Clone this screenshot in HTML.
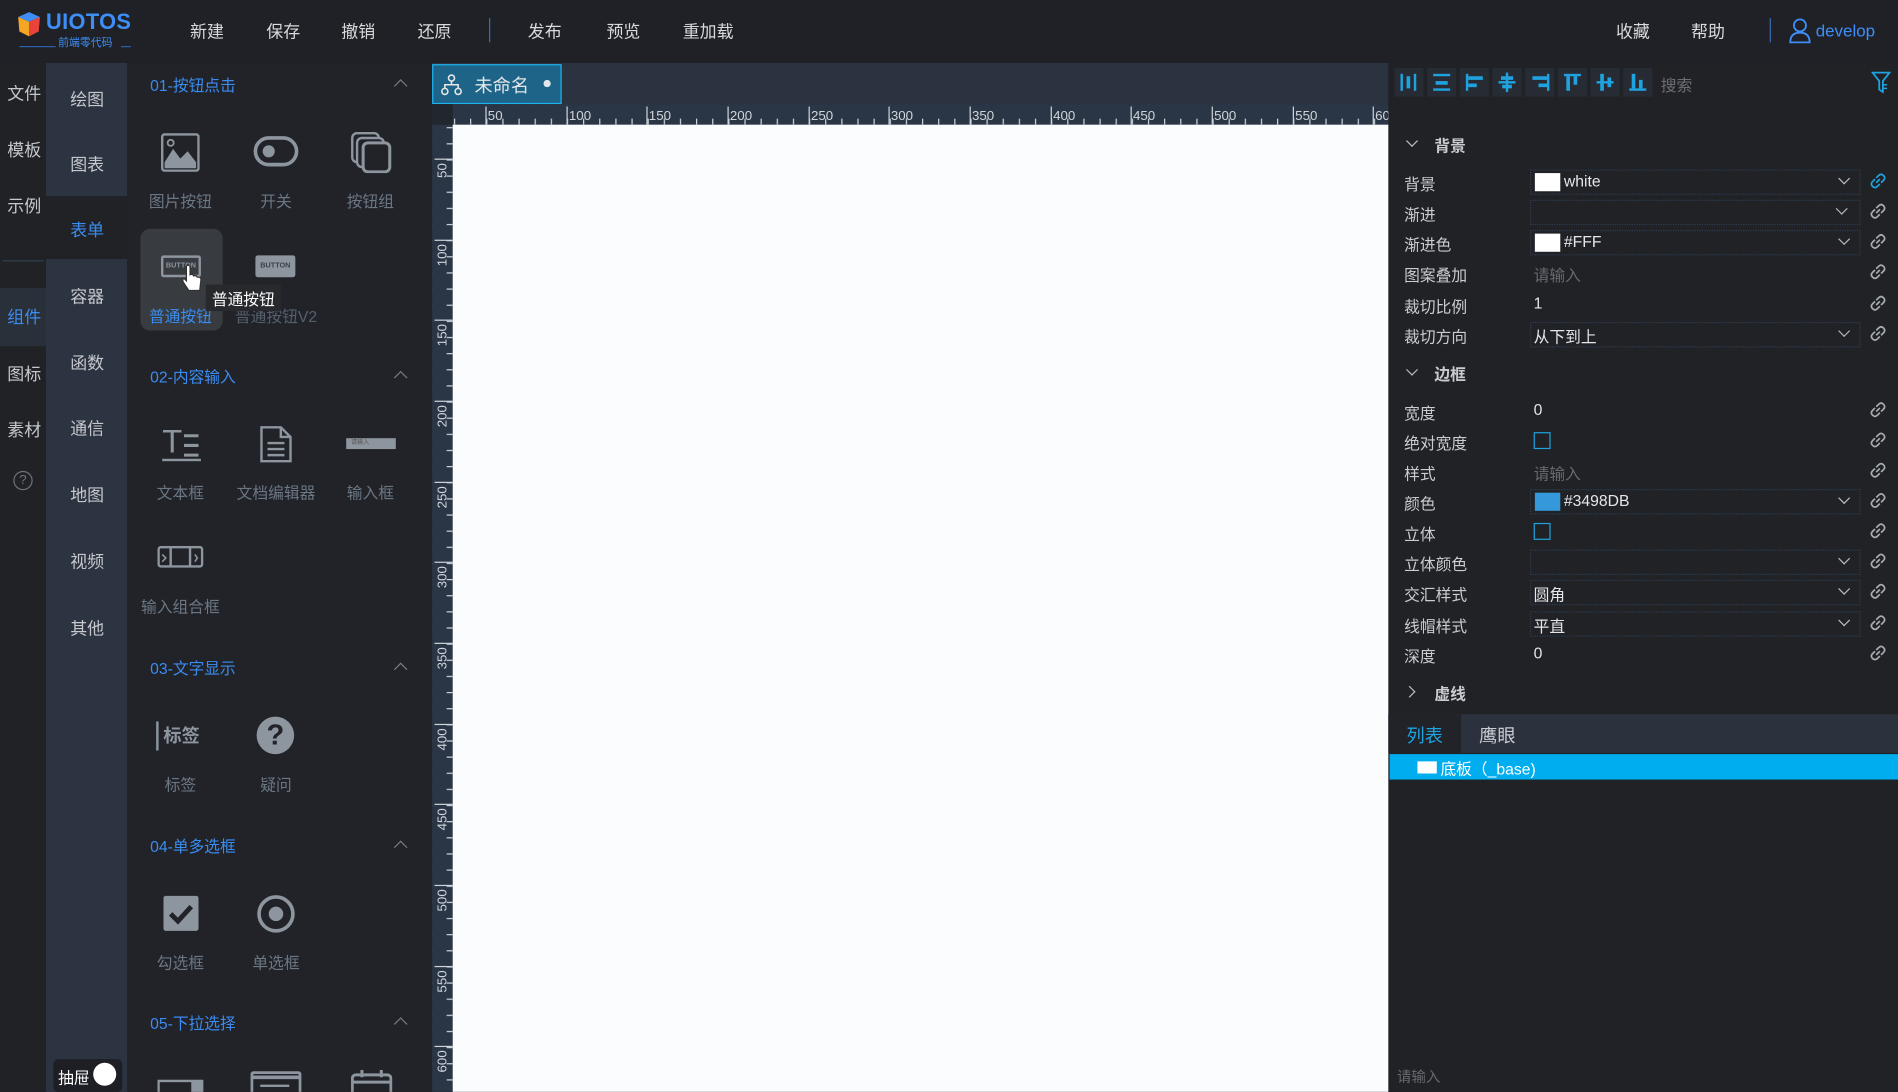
<!DOCTYPE html>
<html><head><meta charset="utf-8"><style>
*{margin:0;padding:0;box-sizing:border-box}
html,body{width:1898px;height:1092px;overflow:hidden;background:#202226}
#w{position:absolute;left:0;top:0;width:1568px;height:902px;transform:scale(1.21046);transform-origin:0 0;font-family:"Liberation Sans","Noto Sans CJK SC",sans-serif;color:#c9ccd1;font-size:13px;background:#202226}
.a{position:absolute;white-space:nowrap}
.m{font-size:14px;color:#d8dadd}
.c1{font-size:14px;color:#c5c8cc}
.sec{font-size:13px;color:#3b8cf0}
.lab{font-size:13px;color:#6c7784;text-align:center;width:80px}
.ic{position:absolute}
.pl{font-size:13px;color:#c9ccd1;left:1160px}
.sel{position:absolute;left:1264px;width:273px;height:21px;border:1px dotted #2e3d52}
.chev{position:absolute;width:7px;height:7px;border-right:1.5px solid #b8bcc2;border-bottom:1.5px solid #b8bcc2;transform:rotate(45deg)}
.lk{position:absolute;left:1544px}
.up{position:absolute;width:8px;height:8px;border-left:1.5px solid #767c85;border-top:1.5px solid #767c85;transform:rotate(45deg);left:327px}
</style></head><body><div id="w">
<!-- top bar -->
<div class="a" style="left:0;top:0;width:1568px;height:52px;background:#1f2127"></div>
<svg class="ic" style="left:13px;top:9px" width="22" height="22" viewBox="0 0 22 22"><path d="M2 5 L11 1 L20 5 L11 9Z" fill="#3f8ef5"/><path d="M2 5 L11 9 L11 21 L3 17Z" fill="#f5a623"/><path d="M11 9 L20 5 L19 17 L11 21Z" fill="#e8443a"/></svg>
<div class="a" style="left:38px;top:8px;font-size:18px;font-weight:bold;color:#3e8ef7;letter-spacing:0.3px">UIOTOS</div>
<div class="a" style="left:48px;top:28px;font-size:9px;color:#3e8ef7">前端零代码</div>
<div class="a" style="left:16px;top:38px;width:30px;border-top:1px solid #2c5fa8"></div>
<div class="a" style="left:100px;top:38px;width:8px;border-top:1px solid #2c5fa8"></div>
<div class="a m" style="left:157px;top:16px">新建</div>
<div class="a m" style="left:220px;top:16px">保存</div>
<div class="a m" style="left:282px;top:16px">撤销</div>
<div class="a m" style="left:345px;top:16px">还原</div>
<div class="a" style="left:404px;top:15px;height:20px;border-left:1px solid #3a6fb0"></div>
<div class="a m" style="left:436px;top:16px">发布</div>
<div class="a m" style="left:501px;top:16px">预览</div>
<div class="a m" style="left:564px;top:16px">重加载</div>
<div class="a m" style="left:1335px;top:16px">收藏</div>
<div class="a m" style="left:1397px;top:16px">帮助</div>
<div class="a" style="left:1462px;top:15px;height:20px;border-left:1px solid #3a6fb0"></div>
<svg class="ic" style="left:1477px;top:14px" width="20" height="22" viewBox="0 0 20 22"><circle cx="10" cy="7" r="5" fill="none" stroke="#3e8ef7" stroke-width="1.5"/><path d="M2 21 Q2 13 10 13 Q18 13 18 21Z" fill="none" stroke="#3e8ef7" stroke-width="1.5"/></svg>
<div class="a" style="left:1500px;top:17px;font-size:14px;color:#3e8ef7">develop</div>

<!-- col1 -->
<div class="a" style="left:0;top:52px;width:38px;height:850px;background:#202226"></div>
<div class="a" style="left:0;top:238px;width:38px;height:48px;background:#2a303a"></div>
<div class="a" style="left:2px;top:215px;width:34px;border-top:1px solid #34404f"></div>
<div class="a c1" style="left:6px;top:67px">文件</div>
<div class="a c1" style="left:6px;top:114px">模板</div>
<div class="a c1" style="left:6px;top:160px">示例</div>
<div class="a c1" style="left:6px;top:252px;color:#3b8cf0">组件</div>
<div class="a c1" style="left:6px;top:299px">图标</div>
<div class="a c1" style="left:6px;top:345px">素材</div>
<div class="a" style="left:11px;top:389px;width:16px;height:16px;border:1px solid #6d737b;border-radius:50%;font-size:11px;color:#6d737b;text-align:center;line-height:14px">?</div>

<!-- col2 -->
<div class="a" style="left:38px;top:52px;width:67px;height:850px;background:#2d3441"></div>
<div class="a" style="left:38px;top:162px;width:67px;height:52px;background:#202226"></div>
<div class="a c1" style="left:58px;top:72px">绘图</div>
<div class="a c1" style="left:58px;top:126px">图表</div>
<div class="a c1" style="left:58px;top:180px;color:#3b8cf0">表单</div>
<div class="a c1" style="left:58px;top:235px">容器</div>
<div class="a c1" style="left:58px;top:290px">函数</div>
<div class="a c1" style="left:58px;top:344px">通信</div>
<div class="a c1" style="left:58px;top:399px">地图</div>
<div class="a c1" style="left:58px;top:454px">视频</div>
<div class="a c1" style="left:58px;top:509px">其他</div>
<div class="a" style="left:44px;top:875px;width:57px;height:27px;background:#1d1f24;border-radius:4px"></div>
<div class="a" style="left:48px;top:880px;font-size:13px;color:#fff">抽屉</div>
<div class="a" style="left:77px;top:878px;width:19px;height:19px;background:#fff;border-radius:50%"></div>

<!-- col3 -->
<div class="a" style="left:105px;top:52px;width:252px;height:850px;background:#212328"></div>
<div class="a sec" style="left:124px;top:60px">01-按钮点击</div><div class="up" style="top:67px"></div>
<svg class="ic" style="left:133px;top:110px" width="32" height="32" viewBox="0 0 32 32"><rect x="1" y="1" width="30" height="30" rx="2" fill="none" stroke="#8d959f" stroke-width="2"/><path d="M3 29 L3 24 L10 13 L16 21 L22 15 L29 24 L29 29Z" fill="#8d959f"/><circle cx="8" cy="8" r="2.5" fill="none" stroke="#8d959f" stroke-width="1.5"/></svg>
<svg class="ic" style="left:209px;top:112px" width="38" height="26" viewBox="0 0 38 26"><rect x="2" y="2" width="34" height="22" rx="11" fill="none" stroke="#8d959f" stroke-width="3"/><circle cx="13" cy="13" r="5" fill="#8d959f"/></svg>
<svg class="ic" style="left:290px;top:109px" width="34" height="34" viewBox="0 0 34 34"><rect x="1" y="1" width="22" height="24" rx="4" fill="none" stroke="#8d959f" stroke-width="2"/><rect x="5" y="5" width="22" height="24" rx="4" fill="#212328" stroke="#8d959f" stroke-width="2"/><rect x="10" y="9" width="22" height="24" rx="4" fill="#212328" stroke="#8d959f" stroke-width="2.5"/></svg>
<div class="a lab" style="left:109px;top:156px">图片按钮</div>
<div class="a lab" style="left:188px;top:156px">开关</div>
<div class="a lab" style="left:266px;top:156px">按钮组</div>
<div class="a" style="left:116px;top:189px;width:68px;height:84px;background:#383b40;border-radius:8px"></div>
<div class="a" style="left:133px;top:211px;width:33px;height:18px;border:2px solid #8d959f;border-radius:2px;font-size:6px;color:#8d959f;text-align:center;line-height:14px;font-weight:bold">BUTTON</div>
<div class="a" style="left:211px;top:211px;width:33px;height:18px;background:#8d959f;border-radius:2px;font-size:6px;color:#3a3f47;text-align:center;line-height:18px;font-weight:bold">BUTTON</div>
<svg class="ic" style="left:150px;top:218px" width="18" height="24" viewBox="0 0 18 24"><path d="M4 2 L4 14 L2 12 Q0 13 2 16 L6 22 L15 22 L16 13 Q16 11 14 11 L13 11 Q12 9 10 10 Q9 8 7 9 L7 2 Q5.5 0 4 2Z" fill="#fff" stroke="#333" stroke-width="1"/></svg>
<div class="a lab" style="left:109px;top:251px;color:#3b8cf0">普通按钮</div>
<div class="a lab" style="left:188px;top:251px;color:#55606c">普通按钮V2</div>
<div class="a" style="left:170px;top:235px;width:62px;height:22px;background:#27292d;color:#fff;font-size:13px;padding:2px 5px">普通按钮</div>

<div class="a sec" style="left:124px;top:301px">02-内容输入</div><div class="up" style="top:308px"></div>
<div class="a" style="left:134px;top:350px;font-size:27px;color:#8d959f;font-family:'Liberation Sans',sans-serif">T</div>
<svg class="ic" style="left:150px;top:357px" width="16" height="26" viewBox="0 0 16 26"><path d="M2 3 H14 M2 11 H14 M2 19 H14" stroke="#8d959f" stroke-width="2.5"/></svg>
<div class="a" style="left:134px;top:379px;width:32px;border-top:2.5px solid #8d959f"></div>
<svg class="ic" style="left:214px;top:351px" width="28" height="32" viewBox="0 0 28 32"><path d="M2 2 H18 L26 10 V30 H2Z M18 2 V10 H26" fill="none" stroke="#8d959f" stroke-width="2"/><path d="M7 15 H21 M7 20 H21 M7 25 H21" stroke="#8d959f" stroke-width="2"/></svg>
<div class="a" style="left:286px;top:362px;width:41px;height:9px;background:#8d959f;font-size:5px;color:#555;padding-left:4px;line-height:9px">请输入</div>
<div class="a lab" style="left:109px;top:397px">文本框</div>
<div class="a lab" style="left:188px;top:397px">文档编辑器</div>
<div class="a lab" style="left:266px;top:397px">输入框</div>
<svg class="ic" style="left:130px;top:451px" width="38" height="18" viewBox="0 0 38 18"><rect x="1" y="1" width="36" height="16" rx="2" fill="none" stroke="#8d959f" stroke-width="2"/><path d="M11 1 V17 M27 1 V17" stroke="#8d959f" stroke-width="2"/><path d="M4 7 L7 10 L4 13 M31 7 L33 10 L31 13" stroke="#8d959f" stroke-width="1.3" fill="none"/></svg>
<div class="a lab" style="left:109px;top:491px">输入组合框</div>

<div class="a sec" style="left:124px;top:542px">03-文字显示</div><div class="up" style="top:549px"></div>
<div class="a" style="left:129px;top:596px;height:24px;border-left:2px solid #8d959f"></div>
<div class="a" style="left:135px;top:597px;font-size:15px;font-weight:bold;color:#8d959f">标签</div>
<div class="a" style="left:212px;top:592px;width:31px;height:31px;background:#8d959f;border-radius:50%;color:#212328;font-size:24px;font-weight:bold;text-align:center;line-height:31px">?</div>
<div class="a lab" style="left:109px;top:638px">标签</div>
<div class="a lab" style="left:188px;top:638px">疑问</div>

<div class="a sec" style="left:124px;top:689px">04-单多选框</div><div class="up" style="top:696px"></div>
<svg class="ic" style="left:135px;top:740px" width="30" height="30" viewBox="0 0 30 30"><rect x="0" y="0" width="29" height="29" rx="2" fill="#8d959f"/><path d="M6 15 L12 21 L23 9" stroke="#212328" stroke-width="4" fill="none"/></svg>
<svg class="ic" style="left:212px;top:739px" width="32" height="32" viewBox="0 0 32 32"><circle cx="16" cy="16" r="14" fill="none" stroke="#8d959f" stroke-width="3"/><circle cx="16" cy="16" r="6" fill="#8d959f"/></svg>
<div class="a lab" style="left:109px;top:785px">勾选框</div>
<div class="a lab" style="left:188px;top:785px">单选框</div>

<div class="a sec" style="left:124px;top:835px">05-下拉选择</div><div class="up" style="top:842px"></div>
<svg class="ic" style="left:130px;top:890px" width="40" height="12" viewBox="0 0 40 12"><rect x="1" y="3" width="36" height="14" fill="none" stroke="#8d959f" stroke-width="2"/><rect x="28" y="3" width="9" height="14" fill="#8d959f"/></svg>
<svg class="ic" style="left:207px;top:885px" width="42" height="17" viewBox="0 0 42 17"><rect x="1" y="1" width="40" height="20" rx="2" fill="none" stroke="#8d959f" stroke-width="2.5"/><path d="M1 5 H41" stroke="#8d959f" stroke-width="3"/><path d="M8 12 H32" stroke="#8d959f" stroke-width="2"/></svg>
<svg class="ic" style="left:290px;top:884px" width="34" height="18" viewBox="0 0 34 18"><rect x="1" y="4" width="32" height="20" rx="3" fill="none" stroke="#8d959f" stroke-width="2.5"/><path d="M9 0 V6 M25 0 V6 M1 10 H33" stroke="#8d959f" stroke-width="2.5"/></svg>

<!-- canvas area -->
<div class="a" style="left:357px;top:52px;width:790px;height:34px;background:#2b3340"></div>
<div class="a" style="left:357px;top:53px;width:107px;height:33px;background:#1d6488;border:1.5px solid #1fb3ee"></div>
<svg class="ic" style="left:364px;top:61px" width="18" height="18" viewBox="0 0 18 18"><circle cx="9" cy="3.5" r="2.5" fill="none" stroke="#e6e6e6" stroke-width="1.3"/><circle cx="3.5" cy="14.5" r="2.5" fill="none" stroke="#e6e6e6" stroke-width="1.3"/><circle cx="14.5" cy="14.5" r="2.5" fill="none" stroke="#e6e6e6" stroke-width="1.3"/><path d="M9 6 V9 M3.5 12 V9 H14.5 V12" fill="none" stroke="#e6e6e6" stroke-width="1.3"/></svg>
<div class="a" style="left:392px;top:60px;font-size:15px;color:#e3e6ea">未命名</div>
<div class="a" style="left:449px;top:66px;width:6px;height:6px;border-radius:50%;background:#e3e6ea"></div>
<div class="a" style="left:357px;top:86px;width:790px;height:816px;background:#2a3646"></div>
<div class="a" style="left:357px;top:86px;width:17px;height:17px;background:#22262d"></div>
<div class="a" style="left:374px;top:103px;width:773px;height:799px;background:#fbfcfe"></div>
<svg class="ic" style="left:374px;top:86px" width="773" height="17"><defs><pattern id="ph" x="-39" y="0" width="13.333" height="17" patternUnits="userSpaceOnUse"><rect x="0" y="12" width="1" height="5" fill="#d0d4da"/></pattern></defs><rect width="773" height="17" fill="url(#ph)"/>
<g fill="#d0d4da"><rect x="27" y="2" width="1" height="15"/><rect x="94" y="2" width="1" height="15"/><rect x="160" y="2" width="1" height="15"/><rect x="227" y="2" width="1" height="15"/><rect x="294" y="2" width="1" height="15"/><rect x="360" y="2" width="1" height="15"/><rect x="427" y="2" width="1" height="15"/><rect x="494" y="2" width="1" height="15"/><rect x="560" y="2" width="1" height="15"/><rect x="627" y="2" width="1" height="15"/><rect x="694" y="2" width="1" height="15"/><rect x="760" y="2" width="1" height="15"/></g>
<g fill="#d0d4da" font-size="11" font-family="Liberation Sans,sans-serif"><text x="29" y="13">50</text><text x="96" y="13">100</text><text x="162" y="13">150</text><text x="229" y="13">200</text><text x="296" y="13">250</text><text x="362" y="13">300</text><text x="429" y="13">350</text><text x="496" y="13">400</text><text x="562" y="13">450</text><text x="629" y="13">500</text><text x="696" y="13">550</text><text x="762" y="13">60</text></g></svg>
<svg class="ic" style="left:357px;top:103px" width="17" height="799"><defs><pattern id="pv" x="0" y="-38" width="17" height="13.333" patternUnits="userSpaceOnUse"><rect x="12" y="0" width="5" height="1" fill="#d0d4da"/></pattern></defs><rect width="17" height="799" fill="url(#pv)"/>
<g fill="#d0d4da"><rect x="2" y="28" width="15" height="1"/><rect x="2" y="95" width="15" height="1"/><rect x="2" y="161" width="15" height="1"/><rect x="2" y="228" width="15" height="1"/><rect x="2" y="295" width="15" height="1"/><rect x="2" y="361" width="15" height="1"/><rect x="2" y="428" width="15" height="1"/><rect x="2" y="495" width="15" height="1"/><rect x="2" y="561" width="15" height="1"/><rect x="2" y="628" width="15" height="1"/><rect x="2" y="695" width="15" height="1"/><rect x="2" y="761" width="15" height="1"/></g>
<g fill="#d0d4da" font-size="11" font-family="Liberation Sans,sans-serif">
<text transform="translate(12,44) rotate(-90)">50</text><text transform="translate(12,117) rotate(-90)">100</text><text transform="translate(12,183) rotate(-90)">150</text><text transform="translate(12,250) rotate(-90)">200</text><text transform="translate(12,317) rotate(-90)">250</text><text transform="translate(12,383) rotate(-90)">300</text><text transform="translate(12,450) rotate(-90)">350</text><text transform="translate(12,517) rotate(-90)">400</text><text transform="translate(12,583) rotate(-90)">450</text><text transform="translate(12,650) rotate(-90)">500</text><text transform="translate(12,717) rotate(-90)">550</text><text transform="translate(12,783) rotate(-90)">600</text></g></svg>

<!-- right panel -->
<div class="a" style="left:1147px;top:52px;width:421px;height:850px;background:#202226"></div>
<svg class="ic" style="left:1152px;top:56px" width="220" height="24" viewBox="0 0 220 24">
<g fill="#272b33"><rect x="0" y="0" width="24" height="24"/><rect x="27" y="0" width="24" height="24"/><rect x="54" y="0" width="24" height="24"/><rect x="81" y="0" width="24" height="24"/><rect x="108" y="0" width="24" height="24"/><rect x="135" y="0" width="24" height="24"/><rect x="162" y="0" width="24" height="24"/><rect x="189" y="0" width="24" height="24"/></g>
<g fill="#1fa3e0">
<rect x="5" y="5" width="2" height="14"/><rect x="10" y="7" width="3" height="10"/><rect x="16" y="5" width="2" height="14"/>
<rect x="32" y="5" width="14" height="2"/><rect x="34" y="11" width="10" height="3"/><rect x="32" y="17" width="14" height="2"/>
<rect x="59" y="5" width="2" height="14"/><rect x="61" y="7" width="12" height="3"/><rect x="61" y="13" width="7" height="3"/>
<rect x="86" y="11" width="14" height="2"/><rect x="92" y="4" width="2" height="16"/><rect x="88" y="7" width="10" height="3"/><rect x="89" y="14" width="8" height="3"/>
<rect x="126" y="5" width="2" height="14"/><rect x="114" y="7" width="12" height="3"/><rect x="119" y="13" width="7" height="3"/>
<rect x="140" y="5" width="14" height="2"/><rect x="142" y="7" width="3" height="12"/><rect x="148" y="7" width="3" height="7"/>
<rect x="167" y="11" width="14" height="2"/><rect x="170" y="5" width="3" height="14"/><rect x="176" y="8" width="3" height="8"/>
<rect x="194" y="17" width="14" height="2"/><rect x="196" y="5" width="3" height="12"/><rect x="202" y="10" width="3" height="7"/></g></svg>
<div class="a" style="left:1372px;top:60px;font-size:13px;color:#6b6f75">搜索</div>
<svg class="ic" style="left:1546px;top:59px" width="16" height="18" viewBox="0 0 16 18"><path d="M1 1 H15 L9.5 8 V17 L6.5 15 V8Z" fill="none" stroke="#1fa3e0" stroke-width="1.5"/><path d="M10 11 H13 M10 14 H13" stroke="#1fa3e0" stroke-width="1.2"/></svg>

<div class="chev" style="left:1163px;top:113px"></div><div class="a" style="left:1185px;top:110px;font-weight:bold;color:#c9ccd1">背景</div>
<div class="a pl" style="top:142px">背景</div>
<div class="sel" style="top:140px"></div><div class="a" style="left:1268px;top:143px;width:21px;height:15px;background:#fff"></div><div class="a" style="left:1292px;top:142px;color:#e3e6ea">white</div><div class="chev" style="left:1520px;top:144px"></div>
<div class="a pl" style="top:167px">渐进</div>
<div class="sel" style="top:165px"></div><div class="chev" style="left:1518px;top:169px"></div>
<div class="a pl" style="top:192px">渐进色</div>
<div class="sel" style="top:190px"></div><div class="a" style="left:1268px;top:193px;width:21px;height:15px;background:#fff"></div><div class="a" style="left:1292px;top:192px;color:#e3e6ea">#FFF</div><div class="chev" style="left:1520px;top:194px"></div>
<div class="a pl" style="top:217px">图案叠加</div><div class="a" style="left:1267px;top:217px;color:#666a70">请输入</div>
<div class="a pl" style="top:243px">裁切比例</div><div class="a" style="left:1267px;top:243px;color:#e3e6ea">1</div>
<div class="a pl" style="top:268px">裁切方向</div>
<div class="sel" style="top:266px"></div><div class="a" style="left:1267px;top:268px;color:#e3e6ea">从下到上</div><div class="chev" style="left:1520px;top:270px"></div>

<div class="chev" style="left:1163px;top:302px"></div><div class="a" style="left:1185px;top:299px;font-weight:bold;color:#c9ccd1">边框</div>
<div class="a pl" style="top:331px">宽度</div><div class="a" style="left:1267px;top:331px;color:#e3e6ea">0</div>
<div class="a pl" style="top:356px">绝对宽度</div><div class="a" style="left:1267px;top:357px;width:14px;height:14px;border:1.5px solid #1fa3e0"></div>
<div class="a pl" style="top:381px">样式</div><div class="a" style="left:1267px;top:381px;color:#666a70">请输入</div>
<div class="a pl" style="top:406px">颜色</div>
<div class="sel" style="top:404px"></div><div class="a" style="left:1268px;top:407px;width:21px;height:15px;background:#3498db"></div><div class="a" style="left:1292px;top:406px;color:#e3e6ea">#3498DB</div><div class="chev" style="left:1520px;top:408px"></div>
<div class="a pl" style="top:431px">立体</div><div class="a" style="left:1267px;top:432px;width:14px;height:14px;border:1.5px solid #1fa3e0"></div>
<div class="a pl" style="top:456px">立体颜色</div>
<div class="sel" style="top:454px"></div><div class="chev" style="left:1520px;top:458px"></div>
<div class="a pl" style="top:481px">交汇样式</div>
<div class="sel" style="top:479px"></div><div class="a" style="left:1267px;top:481px;color:#e3e6ea">圆角</div><div class="chev" style="left:1520px;top:483px"></div>
<div class="a pl" style="top:507px">线帽样式</div>
<div class="sel" style="top:505px"></div><div class="a" style="left:1267px;top:507px;color:#e3e6ea">平直</div><div class="chev" style="left:1520px;top:509px"></div>
<div class="a pl" style="top:532px">深度</div><div class="a" style="left:1267px;top:532px;color:#e3e6ea">0</div>
<div class="chev" style="left:1161px;top:568px;transform:rotate(-45deg)"></div><div class="a" style="left:1185px;top:563px;font-weight:bold;color:#c9ccd1">虚线</div>

<svg class="ic" style="left:1544px;top:142px" width="15" height="410" viewBox="0 0 15 410">
<defs><g id="L"><path d="M6 9 L9 6 M5 6 L3 8 Q1 10 3 12 Q5 14 7 12 L9 10 M6 5 L8 3 Q10 1 12 3 Q14 5 12 7 L10 9" fill="none" stroke-width="1.4"/></g></defs>
<use href="#L" y="0" stroke="#1fa3e0"/><use href="#L" y="25" stroke="#a8adb4"/><use href="#L" y="50" stroke="#a8adb4"/><use href="#L" y="75" stroke="#a8adb4"/><use href="#L" y="101" stroke="#a8adb4"/><use href="#L" y="126" stroke="#a8adb4"/>
<use href="#L" y="189" stroke="#a8adb4"/><use href="#L" y="214" stroke="#a8adb4"/><use href="#L" y="239" stroke="#a8adb4"/><use href="#L" y="264" stroke="#a8adb4"/><use href="#L" y="289" stroke="#a8adb4"/><use href="#L" y="314" stroke="#a8adb4"/><use href="#L" y="339" stroke="#a8adb4"/><use href="#L" y="365" stroke="#a8adb4"/><use href="#L" y="390" stroke="#a8adb4"/></svg>

<div class="a" style="left:1147px;top:590px;width:421px;height:32px;background:#2b323d"></div>
<div class="a" style="left:1147px;top:590px;width:60px;height:32px;background:#212328"></div>
<div class="a" style="left:1162px;top:597px;font-size:15px;color:#1fa3e0">列表</div>
<div class="a" style="left:1222px;top:597px;font-size:15px;color:#c9ccd1">鹰眼</div>
<div class="a" style="left:1148px;top:623px;width:420px;height:21px;background:#00aeef"></div>
<div class="a" style="left:1171px;top:629px;width:16px;height:10px;background:#fff"></div>
<div class="a" style="left:1190px;top:625px;font-size:13px;color:#fff">底板（_base)</div>
<div class="a" style="left:1154px;top:881px;font-size:12px;color:#666a70">请输入</div>
</div></body></html>
